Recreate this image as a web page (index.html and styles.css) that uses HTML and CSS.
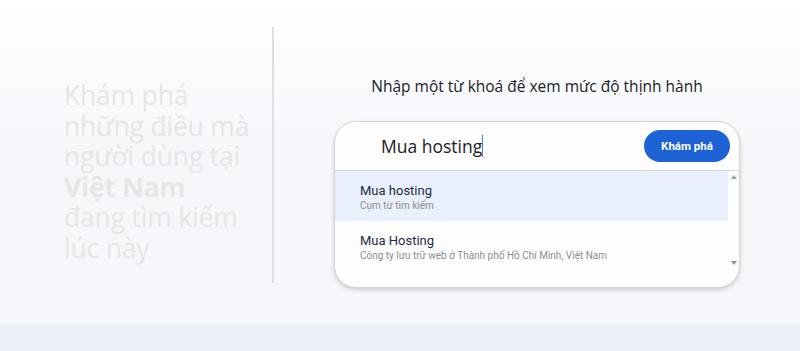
FILE: index.html
```html
<!DOCTYPE html>
<html lang="vi">
  <head>
    <meta charset="UTF-8" />
    <meta name="viewport" content="width=device-width, initial-scale=1.0" />
    <title>Xu hướng tìm kiếm</title>
    <link rel="stylesheet" href="styles.css">
  </head>
  <body>
    <!-- Hero: tagline + search box -->
    <section class="hero">
      <div class="tagline">
        <p>
          Khám phá<br>những điều mà<br>người dùng tại<br><b>Việt Nam</b><br>đang tìm kiếm<br>lúc này
        </p>
      </div>
      <div class="divider"></div>
      <div class="explore">
        <h2>Nhập một từ khoá để xem mức độ thịnh hành</h2>
        <div class="search-card">
          <div class="search-row">
            <span class="query">Mua hosting<span class="caret"></span></span>
            <button class="explore-btn">Khám phá</button>
          </div>
          <div class="suggest">
            <ul class="suggest-list">
              <li class="active">
                <span class="s-title">Mua hosting</span>
                <span class="s-sub">Cụm từ tìm kiếm</span>
              </li>
              <li>
                <span class="s-title">Mua Hosting</span>
                <span class="s-sub">Công ty lưu trữ web ở Thành phố Hồ Chí Minh, Việt Nam</span>
              </li>
            </ul>
            <div class="scrollbar">
              <span class="arrow up"></span>
              <span class="arrow down"></span>
            </div>
          </div>
        </div>
      </div>
    </section>

    <section class="band"></section>
  </body>
</html>
```

FILE: styles.css
```css
body {
  margin: 0;
  font-family: "Open Sans", Roboto, sans-serif;
  color: #202124;
}

.hero {
  height: 325px;
  display: flex;
  background: linear-gradient(180deg, #ffffff 0%, #f5f7fb 45%, #f5f7fb 100%);
  box-sizing: border-box;
  padding-top: 27px;
}

.tagline {
  width: 208px;
  padding-left: 64px;
  padding-top: 53px;
}

.tagline p {
  margin: 0;
  font-size: 26.5px;
  line-height: 30.5px;
  color: #e6e6e8;
  letter-spacing: -0.2px;
}

.tagline b {
  font-weight: 700;
}

.divider {
  width: 2px;
  height: 256px;
  background: #e0e0e2;
}

.explore {
  flex: 1;
  display: flex;
  flex-direction: column;
  align-items: center;
}

.explore h2 {
  margin: 48px 0 0;
  font-size: 15.5px;
  font-weight: 400;
  line-height: 22px;
  color: #202124;
}

.search-card {
  margin-top: 24px;
  width: 406px;
  height: 167px;
  box-sizing: border-box;
  border: 1px solid #d6d6d8;
  border-radius: 22px;
  background: #fdfdfd;
  box-shadow: 0 2px 4px rgba(0, 0, 0, 0.18);
  overflow: hidden;
}

.search-row {
  height: 48px;
  display: flex;
  align-items: center;
  justify-content: space-between;
  padding: 0 9px 0 46px;
  border-bottom: 1px solid #d8d8da;
}

.query {
  font-size: 17.5px;
  color: #202124;
  display: flex;
  align-items: center;
}

.caret {
  display: inline-block;
  width: 1px;
  height: 22px;
  background: #4a7fd8;
}

.explore-btn {
  width: 86px;
  height: 32px;
  border: none;
  border-radius: 16px;
  background: #1e63d6;
  color: #fff;
  font-family: Roboto, sans-serif;
  font-size: 11.5px;
  font-weight: 700;
  cursor: pointer;
}

.suggest {
  display: flex;
  height: 100px;
}

.suggest-list {
  flex: 1;
  list-style: none;
  margin: 0;
  padding: 0;
}

.suggest-list li {
  height: 50px;
  box-sizing: border-box;
  padding: 11px 0 0 25px;
  display: flex;
  flex-direction: column;
  font-family: Roboto, sans-serif;
}

.suggest-list li.active {
  background: #e9f0fb;
}

.s-title {
  font-size: 13px;
  line-height: 17px;
  color: #1f2b47;
}

.s-sub {
  font-size: 10px;
  line-height: 14px;
  color: #8a8f94;
}

.scrollbar {
  width: 11px;
  display: flex;
  flex-direction: column;
  justify-content: space-between;
  align-items: center;
  padding: 4px 0 6px;
}

.arrow {
  width: 0;
  height: 0;
  border-left: 3px solid transparent;
  border-right: 3px solid transparent;
}

.arrow.up {
  border-bottom: 4px solid #a3a3a3;
}

.arrow.down {
  border-top: 4px solid #8f8f8f;
}

.band {
  height: 26px;
  background: #eaeff8;
}
```
